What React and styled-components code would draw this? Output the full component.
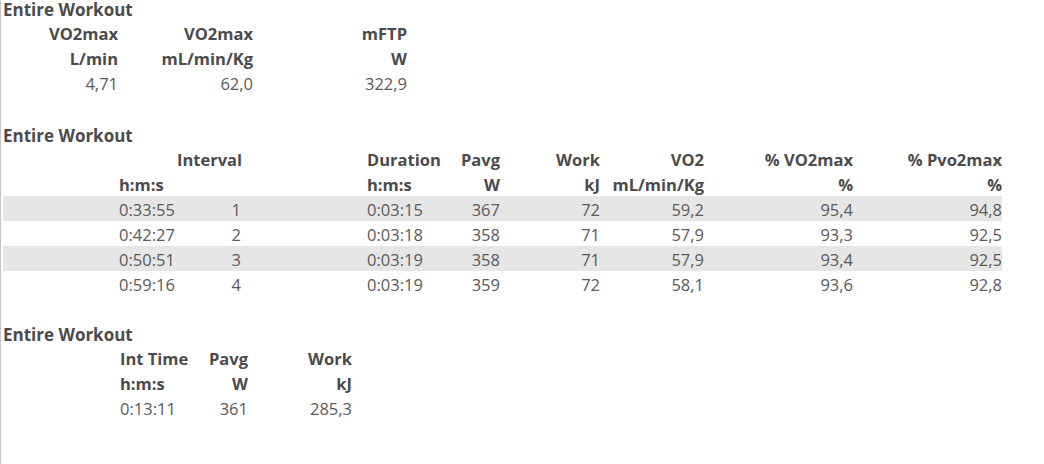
import React from "react";
import styled, { createGlobalStyle } from "styled-components";

const GlobalStyle = createGlobalStyle`
  html, body, #root {
    margin: 0;
    height: 100%;
  }
  body {
    background: #ffffff;
    font-family: "Open Sans", "Noto Sans", sans-serif;
    -webkit-font-smoothing: antialiased;
  }
`;

const Page = styled.div`
  box-sizing: border-box;
  min-height: 100vh;
  border-left: 1px solid #c4c4c4;
  padding-left: 2px;
  display: flex;
  flex-direction: column;
`;

const Section = styled.section`
  display: flex;
  flex-direction: column;
  margin-top: ${(p) => p.$spaceTop || 0}px;
`;

// bold title sitting on top of every table
const SectionTitle = styled.div`
  height: 20px;
  line-height: 20px;
  font-size: 17px;
  font-weight: 700;
  color: #4b4b4b;
  white-space: nowrap;
`;

const Grid = styled.div`
  display: grid;
  grid-template-columns: ${(p) => p.$cols};
  width: max-content;
`;

const Row = styled.div`
  display: contents;
`;

const Cell = styled.div`
  box-sizing: border-box;
  height: 25px;
  padding-top: 2px;
  line-height: 23px;
  font-size: 16.5px;
  white-space: nowrap;
  text-align: ${(p) => (p.$left ? "left" : "right")};
  padding-left: ${(p) => (p.$indent ? `${p.$indent}px` : "0")};
  font-weight: ${(p) => (p.$head ? 700 : 400)};
  color: ${(p) => (p.$head ? "#4b4b4b" : "#5a5a5a")};
  background: ${(p) => (p.$striped ? "#e6e6e6" : "transparent")};
`;

function Table({ cols, layout, headers, rows, striped }) {
  return (
    <Grid $cols={cols}>
      {headers.map((h, i) => (
        <Row key={"h" + i}>
          {h.map((text, j) => (
            <Cell key={j} $head $left={layout[j].left} $indent={layout[j].indent}>
              {text}
            </Cell>
          ))}
        </Row>
      ))}
      {rows.map((r, i) => (
        <Row key={"r" + i}>
          {r.map((text, j) => (
            <Cell
              key={j}
              $left={layout[j].left}
              $indent={layout[j].indent}
              $striped={striped && i % 2 === 0}
            >
              {text}
            </Cell>
          ))}
        </Row>
      ))}
    </Grid>
  );
}

const summaryLayout = [{}, {}, {}];
const intervalLayout = [
  { left: true, indent: 116 },
  {},
  { left: true, indent: 126 },
  {},
  {},
  {},
  {},
  {},
];
const totalLayout = [{ left: true, indent: 117 }, {}, {}];

export default function App() {
  return (
    <>
      <GlobalStyle />
      <Page>
        <Section>
          <SectionTitle>Entire Workout</SectionTitle>
          <Table
            cols="115px 135px 154px"
            layout={summaryLayout}
            headers={[
              ["VO2max", "VO2max", "mFTP"],
              ["L/min", "mL/min/Kg", "W"],
            ]}
            rows={[["4,71", "62,0", "322,9"]]}
          />
        </Section>

        <Section $spaceTop={31}>
          <SectionTitle>Entire Workout</SectionTitle>
          <Table
            cols="174px 64px 204px 55px 100px 104px 149px 149px"
            layout={intervalLayout}
            striped
            headers={[
              ["", "Interval", "Duration", "Pavg", "Work", "VO2", "% VO2max", "% Pvo2max"],
              ["h:m:s", "", "h:m:s", "W", "kJ", "mL/min/Kg", "%", "%"],
            ]}
            rows={[
              ["0:33:55", "1", "0:03:15", "367", "72", "59,2", "95,4", "94,8"],
              ["0:42:27", "2", "0:03:18", "358", "71", "57,9", "93,3", "92,5"],
              ["0:50:51", "3", "0:03:19", "358", "71", "57,9", "93,4", "92,5"],
              ["0:59:16", "4", "0:03:19", "359", "72", "58,1", "93,6", "92,8"],
            ]}
          />
        </Section>

        <Section $spaceTop={29}>
          <SectionTitle>Entire Workout</SectionTitle>
          <Table
            cols="197px 48px 104px"
            layout={totalLayout}
            headers={[
              ["Int Time", "Pavg", "Work"],
              ["h:m:s", "W", "kJ"],
            ]}
            rows={[["0:13:11", "361", "285,3"]]}
          />
        </Section>
      </Page>
    </>
  );
}
